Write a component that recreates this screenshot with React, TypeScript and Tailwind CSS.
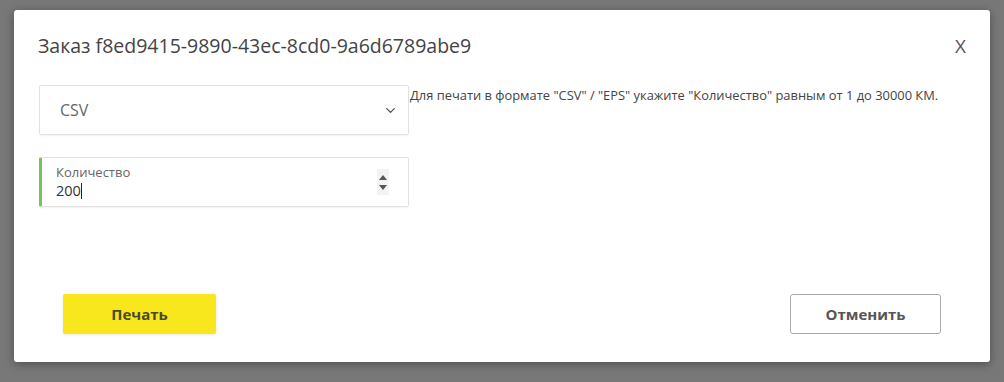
import { ChevronDown } from 'lucide-react';

const font = { fontFamily: '"Open Sans", "Noto Sans", sans-serif' };

const Spinner = () => (
  <div className="flex flex-col items-center justify-center w-[12px] h-[26px] bg-[#f3f3f3] gap-[5px]">
    <svg width="8" height="5" viewBox="0 0 8 5">
      <path d="M0 5 L4 0 L8 5 Z" fill="#555" />
    </svg>
    <svg width="8" height="5" viewBox="0 0 8 5">
      <path d="M0 0 L4 5 L8 0 Z" fill="#555" />
    </svg>
  </div>
);

const OrderModal = () => {
  return (
    <div className="w-[976px] h-[352px] bg-white rounded-[3px] shadow-[0_2px_10px_rgba(0,0,0,0.35)] flex flex-col">
      <div className="flex items-center justify-between pl-[24px] pr-[24px] pt-[23px]">
        <h2 className="text-[19.5px] leading-[26px] text-[#444]">Заказ f8ed9415-9890-43ec-8cd0-9a6d6789abe9</h2>
        <button className="text-[19px] leading-[26px] text-[#555]">X</button>
      </div>

      <div className="flex pl-[25px] pt-[26px]">
        <div className="flex flex-col gap-[22px] w-[370px]">
          <div className="h-[50px] border border-[#e2e2e2] rounded-[2px] flex items-center justify-between pl-[20px] pr-[10px] shadow-[0_1px_2px_rgba(0,0,0,0.06)]">
            <span className="text-[16px] text-[#666]">CSV</span>
            <ChevronDown size={15} strokeWidth={2.2} className="text-[#555]" />
          </div>
          <div className="h-[50px] border border-[#e2e2e2] border-l-[3px] border-l-[#78c257] rounded-[2px] flex items-center justify-between pl-[14px] pr-[19px] shadow-[0_1px_2px_rgba(0,0,0,0.06)]">
            <div className="flex flex-col">
              <span className="text-[13px] leading-[17px] text-[#666]">Количество</span>
              <span className="text-[14.5px] leading-[19px] text-[#333]">
                200<span className="inline-block w-px h-[16px] bg-[#222] align-[-3px]" />
              </span>
            </div>
            <Spinner />
          </div>
        </div>
        <p className="text-[12.9px] leading-[17px] text-[#444] pt-[2px] pl-[1px]">
          Для печати в формате "CSV" / "EPS" укажите "Количество" равным от 1 до 30000 КМ.
        </p>
      </div>

      <div className="mt-auto flex justify-between pl-[49px] pr-[49px] pb-[28px]">
        <button className="w-[153px] h-[40px] bg-[#f8e71c] rounded-[2px] text-[15px] font-bold text-[#4a4a2a] shadow-[0_1px_3px_rgba(0,0,0,0.1)]">
          Печать
        </button>
        <button className="w-[151px] h-[40px] bg-white border border-[#aaa] rounded-[3px] text-[15px] font-bold text-[#555]">
          Отменить
        </button>
      </div>
    </div>
  );
};

export default function App() {
  return (
    <div className="w-[1004px] h-[382px] bg-[#787878] pt-[10px] pl-[14px]" style={font}>
      <OrderModal />
    </div>
  );
}
